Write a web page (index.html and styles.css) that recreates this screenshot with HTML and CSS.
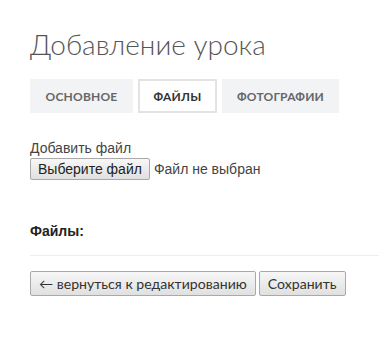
FILE: index.html
```html
<!DOCTYPE html>
<html lang="ru">
<head>
    <meta charset="UTF-8">
    <title>Добавление урока</title>
    <link rel="stylesheet" href="styles.css">
</head>
<body>
    <div class="page">
        <h1 class="title">Добавление урока</h1>

        <!-- Tabs -->
        <div class="tabs">
            <div class="tab">Основное</div>
            <div class="tab active">Файлы</div>
            <div class="tab">Фотографии</div>
        </div>

        <div class="upload">
            <div class="upload-label">Добавить файл</div>
            <div class="file-input">
                <button class="file-btn">Выберите файл</button>
                <span class="file-name">Файл не выбран</span>
            </div>
        </div>

        <div class="files-title">Файлы:</div>
        <hr class="divider">

        <div class="actions">
            <button class="btn">&larr; вернуться к редактированию</button>
            <button class="btn">Сохранить</button>
        </div>
    </div>
</body>
</html>
```

FILE: styles.css
```css
body {
    margin: 0;
    background: #fff;
    font-family: Lato, "Open Sans", sans-serif;
    color: #444;
}
.page {
    padding: 24px 0 0 30px;
}
.title {
    margin: 0;
    font-weight: 300;
    font-size: 28px;
    line-height: 40px;
    color: #555;
}
.tabs {
    display: flex;
    gap: 5px;
    margin-top: 15px;
}
.tab {
    height: 34px;
    box-sizing: border-box;
    display: flex;
    align-items: center;
    justify-content: center;
    background: #f2f3f5;
    text-transform: uppercase;
    font-weight: 700;
    font-size: 12px;
    letter-spacing: 0.2px;
    color: #666;
    border: 2px solid #f2f3f5;
}
.tab:nth-child(1) { width: 103px; }
.tab:nth-child(2) { width: 79px; }
.tab:nth-child(3) { width: 117px; }
.tab.active {
    background: #fff;
    border-color: #e3e3e3;
    color: #333;
}
.upload {
    margin-top: 26px;
    font-family: "Liberation Sans", Arial, sans-serif;
    font-size: 14px;
    color: #444;
}
.upload-label {
    line-height: 18px;
}
.file-input {
    display: flex;
    align-items: center;
    gap: 4px;
    margin-top: 1px;
}
.file-btn, .btn {
    height: 22px;
    padding: 0 7px;
    border: 1px solid #a9a9a9;
    border-radius: 2px;
    background: linear-gradient(#f7f7f7, #e0e0e0);
    font-family: "Liberation Sans", Arial, sans-serif;
    font-size: 14px;
    color: #222;
}
.files-title {
    margin-top: 43px;
    font-family: "Liberation Sans", Arial, sans-serif;
    font-weight: 700;
    font-size: 14px;
    color: #222;
}
.divider {
    margin: 16px 0 15px;
    border: 0;
    border-top: 1px solid #eee;
}
.actions {
    display: flex;
    gap: 3px;
}
.btn {
    height: 25px;
    padding: 0 8px;
    font-family: Lato, sans-serif;
    font-size: 14.1px;
    color: #333;
}
```
